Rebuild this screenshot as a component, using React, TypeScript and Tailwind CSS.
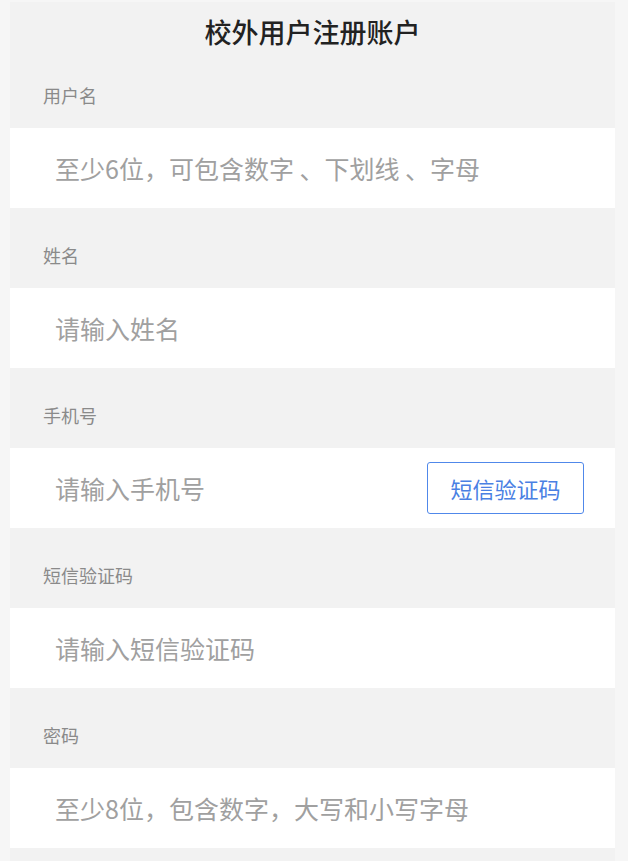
import React from "react";

const cjk = { fontFamily: '"Noto Sans CJK SC", "Noto Sans", sans-serif' };

type Field = {
    label: string;
    placeholder: string;
    type?: string;
    action?: string;
};

const fields: Field[] = [
    { label: "用户名", placeholder: "至少6位，可包含数字 、下划线 、字母" },
    { label: "姓名", placeholder: "请输入姓名" },
    { label: "手机号", placeholder: "请输入手机号", type: "tel", action: "短信验证码" },
    { label: "短信验证码", placeholder: "请输入短信验证码" },
    { label: "密码", placeholder: "至少8位，包含数字，大写和小写字母", type: "password" },
];

export default function App() {
    return (
        <div className="min-h-[861px] w-full bg-[#f6f6f6] pt-[2px]" style={cjk}>
            <div className="ml-[10px] w-[605px] bg-[#f2f2f2] pb-[13px]">
                {/* Header */}
                <h1 className="pt-[16px] pb-[3px] text-center text-[27px] leading-[27px] font-medium text-[#222]">
                    校外用户注册账户
                </h1>

                {fields.map((field) => (
                    <div key={field.label}>
                        <div className="h-[80px] pt-[38px] pl-[33px] text-[18px] leading-[18px] text-[#8a8a8a]">
                            {field.label}
                        </div>
                        <div className="flex h-[80px] items-center bg-white pl-[45px] pr-[31px]">
                            <input
                                type={field.type ?? "text"}
                                placeholder={field.placeholder}
                                className="min-w-0 flex-1 bg-transparent text-[25px] leading-[30px] text-[#333] outline-none placeholder:text-[#a0a0a0]"
                                style={cjk}
                            />
                            {field.action && (
                                <button
                                    type="button"
                                    className="h-[52px] w-[157px] shrink-0 rounded-[3px] border border-[#5088ea] bg-white text-[22px] leading-none text-[#4a80e3]"
                                    style={cjk}
                                >
                                    {field.action}
                                </button>
                            )}
                        </div>
                    </div>
                ))}
            </div>
        </div>
    );
}
